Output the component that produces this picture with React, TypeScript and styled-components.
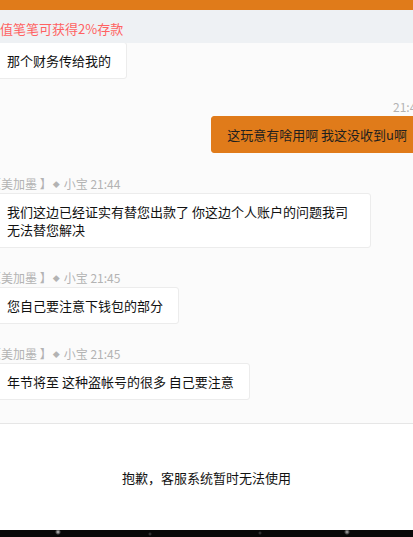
import React from "react";
import styled, { createGlobalStyle } from "styled-components";

const Global = createGlobalStyle`
  html, body { margin: 0; padding: 0; }
  body {
    width: 413px;
    height: 537px;
    overflow: hidden;
    font-family: "Noto Sans CJK SC", "Noto Sans", sans-serif;
    background: #ffffff;
  }
`;

const Page = styled.div`
  width: 413px;
  height: 537px;
  display: flex;
  flex-direction: column;
  overflow: hidden;
`;

const TopBar = styled.div`
  height: 10px;
  background: #e07b1a;
  flex: none;
`;

const Notice = styled.div`
  height: 33px;
  flex: none;
  background: #eef1f4;
  color: #ff6262;
  font-size: 13px;
  line-height: 33px;
  white-space: nowrap;
  padding-top: 2px;
  box-sizing: border-box;
`;

const ChatArea = styled.div`
  height: 381px;
  flex: none;
  background: #fbfbfb;
  border-bottom: 1px solid #e6e6e6;
  overflow: hidden;
  box-sizing: border-box;
`;

const Track = styled.div`
  margin: -1px -10px 0 -9px;
  display: flex;
  flex-direction: column;
`;

const Group = styled.div<{ $mine?: boolean; $gap: number }>`
  display: flex;
  flex-direction: column;
  align-items: ${(p) => (p.$mine ? "flex-end" : "flex-start")};
  margin-top: ${(p) => p.$gap}px;
`;

const Meta = styled.div<{ $shift?: number }>`
  font-size: 12px;
  line-height: 17px;
  height: 17px;
  color: #b3b3b3;
  margin-bottom: 1px;
  margin-left: ${(p) => p.$shift ?? 0}px;
  white-space: nowrap;
`;

const Diamond = styled.span`
  display: inline-block;
  font-size: 7px;
  line-height: 10px;
  transform: translateY(-2px);
  margin: 0 4px 0 1px;
`;

const Bubble = styled.div<{ $mine?: boolean }>`
  box-sizing: border-box;
  width: max-content;
  max-width: 380px;
  padding: 9px 15px 8px 15px;
  font-size: 13px;
  line-height: 18px;
  border-radius: 3px;
  background: ${(p) => (p.$mine ? "#e07b1a" : "#ffffff")};
  border: 1px solid ${(p) => (p.$mine ? "#e07b1a" : "#ececec")};
  color: ${(p) => (p.$mine ? "#1f1f1f" : "#111111")};
  white-space: ${(p) => (p.$mine ? "nowrap" : "normal")};
`;

const Footer = styled.div`
  height: 106px;
  flex: none;
  background: #ffffff;
  display: flex;
  align-items: center;
  justify-content: center;
  font-size: 13px;
  color: #111111;
  box-sizing: border-box;
`;

const StarStrip = styled.div`
  flex: 1;
  background:
    radial-gradient(circle at 58px 2px, rgba(255,255,255,0.8) 0, rgba(255,255,255,0) 3px),
    radial-gradient(circle at 347px 2px, rgba(255,255,255,0.7) 0, rgba(255,255,255,0) 3px),
    radial-gradient(circle at 150px 4px, rgba(255,255,255,0.25) 0, rgba(255,255,255,0) 2px),
    radial-gradient(circle at 260px 3px, rgba(255,255,255,0.25) 0, rgba(255,255,255,0) 2px),
    #080808;
`;

type Msg = { mine?: boolean; meta?: string; time?: string; text: string; gap: number };

const messages: Msg[] = [
  { text: "那个财务传给我的", gap: 0 },
  { mine: true, time: "21:45", text: "这玩意有啥用啊 我这没收到u啊", gap: 19 },
  { meta: "21:44", text: "我们这边已经证实有替您出款了 你这边个人账户的问题我司无法替您解决", gap: 21.5 },
  { meta: "21:45", text: "您自己要注意下钱包的部分", gap: 21 },
  { meta: "21:45", text: "年节将至 这种盗帐号的很多 自己要注意", gap: 21.5 },
];

export default function App() {
  return (
    <Page>
      <Global />
      <TopBar />
      <Notice>值笔笔可获得2%存款</Notice>
      <ChatArea>
        <Track>
          {messages.map((m, i) => (
            <Group key={i} $mine={m.mine} $gap={m.gap}>
              {m.time && <Meta>{m.time}</Meta>}
              {m.meta && (
                <Meta $shift={-2}>
                  【美加墨 】<Diamond>◆</Diamond>小宝 {m.meta}
                </Meta>
              )}
              <Bubble $mine={m.mine}>{m.text}</Bubble>
            </Group>
          ))}
        </Track>
      </ChatArea>
      <Footer>抱歉，客服系统暂时无法使用</Footer>
      <StarStrip />
    </Page>
  );
}
